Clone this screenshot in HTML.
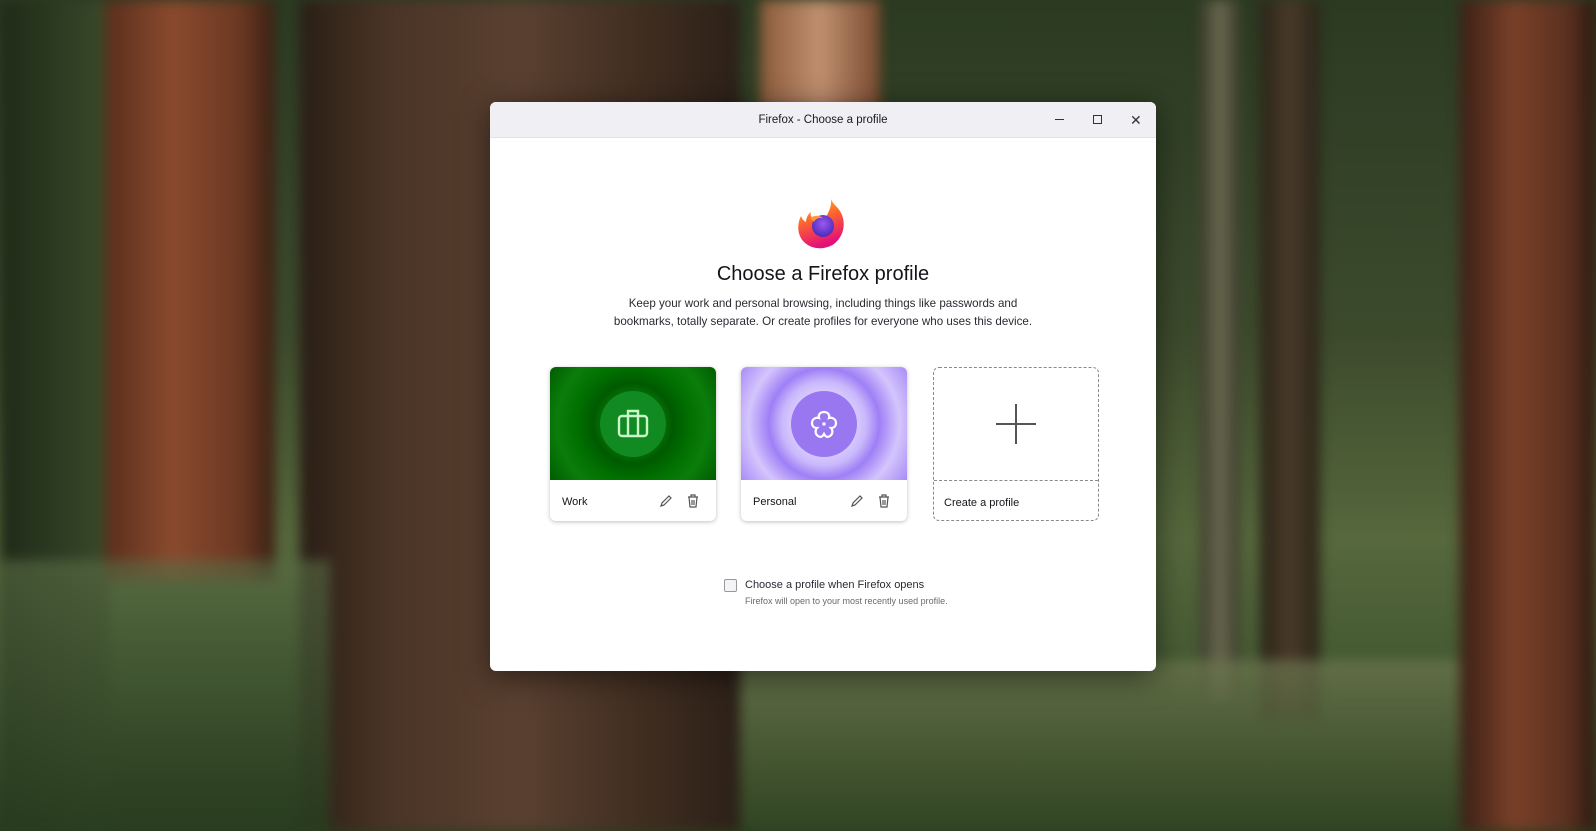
<!DOCTYPE html>
<html><head><meta charset="utf-8"><style>
*{margin:0;padding:0;box-sizing:border-box}
body{width:1596px;height:831px;overflow:hidden;position:relative;font-family:"Liberation Sans",sans-serif;
background:linear-gradient(180deg,#2b3a22 0%,#3c4a2c 40%,#56683c 65%,#3f5530 85%,#2c3d22 100%);}
.bgw{position:absolute;left:0;top:0;width:1596px;height:831px;filter:blur(6px)}
.bg{position:absolute}
.win{position:absolute;left:490px;top:102px;width:666px;height:569px;background:#fff;border-radius:6px;overflow:hidden;box-shadow:0 6px 30px rgba(0,0,0,.5)}
.tb{height:36px;background:#f0f0f4;border-bottom:1px solid #e2e2e6;text-align:center;font-size:11.5px;line-height:36px;color:#1a1a1a;position:relative}
.card{position:absolute;top:265px;width:166px;height:154px;border-radius:6px;background:#fff;box-shadow:0 1px 4px rgba(0,0,0,.25);overflow:hidden}
.img{height:113px;position:relative}
.circ{position:absolute;left:50%;top:50%;width:66px;height:66px;margin:-33px 0 0 -33px;border-radius:50%}
.lbl{position:absolute;left:12px;top:129px;font-size:11px;color:#15141a}
.ic{position:absolute;top:126px}
</style></head><body>
<div class="bgw">
<div class="bg" style="left:0;top:0;width:110px;height:831px;background:linear-gradient(90deg,#1f2a18,#3a4a2a)"></div>
<div class="bg" style="left:105px;top:0;width:170px;height:580px;background:linear-gradient(90deg,#5a2e1c,#8a4a2e 40%,#6a3822 80%,#3a2014)"></div>
<div class="bg" style="left:300px;top:0;width:440px;height:831px;background:linear-gradient(90deg,#2a1e16,#4a3426 20%,#5a4030 50%,#3e2c20 80%,#2c2018)"></div>
<div class="bg" style="left:760px;top:0;width:120px;height:110px;background:linear-gradient(90deg,#8a5a3a,#c09070,#7a4a30)"></div>
<div class="bg" style="left:1200px;top:0;width:40px;height:700px;background:linear-gradient(90deg,#3a3a2a,#6a6a50,#3a3a2a)"></div>
<div class="bg" style="left:1260px;top:0;width:60px;height:720px;background:linear-gradient(90deg,#2a2418,#4a3a2a,#2a2418)"></div>
<div class="bg" style="left:1460px;top:0;width:136px;height:831px;background:linear-gradient(90deg,#3a2016,#7a4028 40%,#5a3020 80%,#2a180e)"></div>
<div class="bg" style="left:0;top:560px;width:330px;height:271px;background:linear-gradient(180deg,rgba(90,110,70,.6),rgba(40,60,30,.9))"></div>
<div class="bg" style="left:740px;top:660px;width:720px;height:171px;background:linear-gradient(180deg,rgba(110,120,80,.7),rgba(50,70,35,.9))"></div>
</div>

<div class="win">
 <div class="tb">Firefox - Choose a profile
  <span style="position:absolute;left:565px;top:17px;width:9px;height:1px;background:#333"></span>
  <span style="position:absolute;left:603px;top:13px;width:9px;height:9px;border:1px solid #333"></span>
  <span style="position:absolute;left:640px;top:0;font-size:14px;color:#333">✕</span>
 </div>
 <svg style="position:absolute;left:306px;top:95px" width="54" height="54" viewBox="0 0 54 54">
  <defs><linearGradient id="f" x1="0" y1="0" x2="0.3" y2="1"><stop offset="0" stop-color="#ffbd2e"/><stop offset=".45" stop-color="#ff6a2a"/><stop offset="1" stop-color="#e3107a"/></linearGradient>
  <radialGradient id="g" cx=".5" cy=".4" r=".6"><stop offset="0" stop-color="#9b59f0"/><stop offset="1" stop-color="#4a2bb8"/></radialGradient></defs>
  <path d="M35 2c2 6 8 8 11 16 4 10 1 22-8 29-9 6-22 6-30-2C1 38 1 27 5 19c1 3 3 5 5 6 0-4 2-8 5-10-1 3 0 5 2 6 4-2 9-2 12 1 3-6 7-12 6-20z" fill="url(#f)"/>
  <circle cx="27" cy="29" r="11" fill="url(#g)"/>
  <path d="M14 21c4-3 10-3 13 0-4-1-8 1-9 4z" fill="#ff9a3c"/>
 </svg>
 <div style="position:absolute;left:0;width:100%;top:161px;text-align:center;font-size:20px;color:#15141a">Choose a Firefox profile</div>
 <div style="position:absolute;left:0;width:100%;top:193px;text-align:center;font-size:11.6px;line-height:18px;color:#2b2a33">Keep your work and personal browsing, including things like passwords and<br>bookmarks, totally separate. Or create profiles for everyone who uses this device.</div>

 <div class="card" style="left:60px">
  <div class="img" style="background:radial-gradient(circle at 50% 50%,#0a7a0a 0 25%,#005a00 40%,#006e00 55%,#0b7d0b 75%,#005c00)">
   <div class="circ" style="background:#118a22"></div>
   <svg style="position:absolute;left:66px;top:40px" width="34" height="32" viewBox="0 0 34 32" fill="none" stroke="#c8f7c8" stroke-width="2.4"><rect x="3" y="9" width="28" height="20" rx="3"/><path d="M12 9V4h10v5M12 9v20M22 9v20"/></svg>
  </div>
  <div class="lbl">Work</div>
  <svg class="ic" style="left:108px" width="16" height="16" viewBox="0 0 16 16" fill="none" stroke="#555" stroke-width="1.2"><path d="M3 13l1-3 7-7 2 2-7 7z"/></svg>
  <svg class="ic" style="left:136px" width="14" height="16" viewBox="0 0 14 16" fill="none" stroke="#555" stroke-width="1.2"><path d="M2 4h10M5 4V2h4v2M3 4l1 10h6l1-10M6 7v5M8 7v5"/></svg>
 </div>

 <div class="card" style="left:251px">
  <div class="img" style="background:radial-gradient(circle at 50% 50%,#9a7bf5 0 20%,#d8c9ff 32%,#c9b8fb 42%,#9f7ff6 55%,#d4c5fc 75%,#a88bf6)">
   <div class="circ" style="background:#9877f0"></div>
   <svg style="position:absolute;left:66px;top:40px" width="34" height="34" viewBox="0 0 34 34" fill="none" stroke="#fff" stroke-width="2.2"><path d="M17 5c4 0 6 3 5 6 3-1 7 1 7 5s-3 5-5 5c2 2 2 6-1 8s-5 0-6-2c-1 2-3 4-6 2s-3-6-1-8c-2 0-5-1-5-5s4-6 7-5c-1-3 1-6 5-6z"/><rect x="15.5" y="15.5" width="3" height="3" fill="#fff" stroke="none"/></svg>
  </div>
  <div class="lbl">Personal</div>
  <svg class="ic" style="left:108px" width="16" height="16" viewBox="0 0 16 16" fill="none" stroke="#555" stroke-width="1.2"><path d="M3 13l1-3 7-7 2 2-7 7z"/></svg>
  <svg class="ic" style="left:136px" width="14" height="16" viewBox="0 0 14 16" fill="none" stroke="#555" stroke-width="1.2"><path d="M2 4h10M5 4V2h4v2M3 4l1 10h6l1-10M6 7v5M8 7v5"/></svg>
 </div>

 <div class="card" style="left:443px;box-shadow:none;border:1.3px dashed #8a8a8a">
  <div class="img" style="border-bottom:1.3px dashed #8a8a8a">
   <span style="position:absolute;left:62px;top:55px;width:40px;height:2px;background:#555"></span>
   <span style="position:absolute;left:81px;top:36px;width:2px;height:40px;background:#555"></span>
  </div>
  <div class="lbl" style="left:10px">Create a profile</div>
 </div>

 <div style="position:absolute;left:234px;top:477px;width:13px;height:13px;border:1px solid #999;border-radius:2px;background:#f4f4f6"></div>
 <div style="position:absolute;left:255px;top:477px;font-size:11px;color:#2b2a33">Choose a profile when Firefox opens</div>
 <div style="position:absolute;left:255px;top:494px;font-size:9px;color:#6a6a70">Firefox will open to your most recently used profile.</div>
</div>
</body></html>
